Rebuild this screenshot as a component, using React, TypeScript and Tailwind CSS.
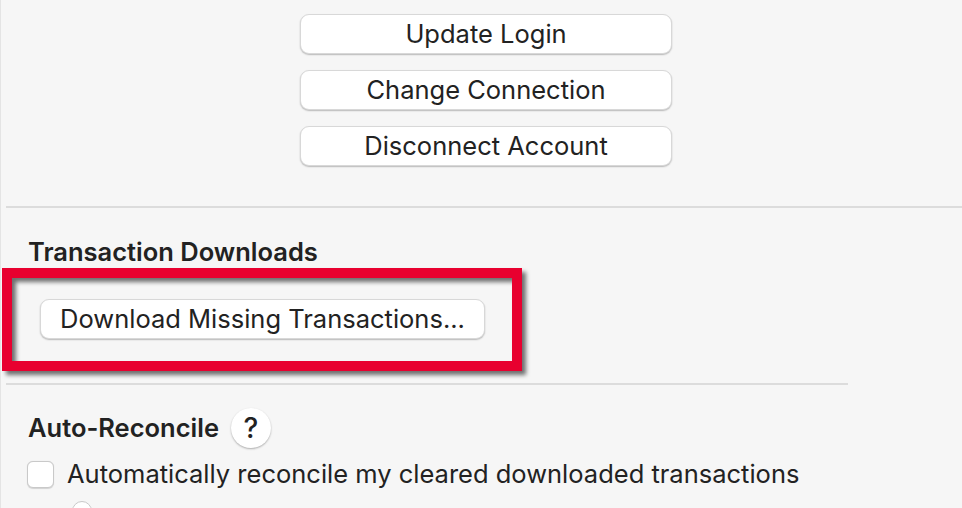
const font = { fontFamily: "Inter, 'Liberation Sans', sans-serif" }

const MacButton = ({ label, className }: { label: string; className: string }) => {
  return (
    <button
      className={`h-[40px] rounded-[9px] bg-white text-[25.5px] leading-[30px] text-[#222222] border-[0.5px] border-[#d8d8d8] shadow-[0_1px_1.5px_rgba(0,0,0,0.25)] ${className}`}
    >
      {label}
    </button>
  )
}

const App = () => {
  return (
    <div style={font} className="relative h-[508px] w-[962px] overflow-hidden bg-[#f6f6f6] border-l border-[#e4e4e4]">
      <div className="flex flex-col gap-4 pt-[14px] pl-[299px] w-[671px]">
        <MacButton label="Update Login" className="w-full" />
        <MacButton label="Change Connection" className="w-full" />
        <MacButton label="Disconnect Account" className="w-full" />
      </div>

      <div className="mt-[40px] ml-[5px] h-[2px] bg-[#dcdcdc]" />

      <div className="pl-[27px] pt-[29px] text-[25.5px] font-semibold leading-[30px] text-[#222222]">
        Transaction Downloads
      </div>

      <div className="pl-[39px] pt-[32px]">
        <MacButton label="Download Missing Transactions..." className="w-[445px]" />
      </div>

      <div className="mt-[44px] ml-[5px] w-[842px] h-[2px] bg-[#dcdcdc]" />

      <div className="flex items-center gap-[12px] pl-[27px] pt-[23px]">
        <span className="text-[25.5px] font-semibold leading-[30px] text-[#222222]">Auto-Reconcile</span>
        <span className="flex h-[40px] w-[40px] items-center justify-center rounded-full bg-white text-[28px] font-medium text-[#222222] shadow-[0_1px_2px_rgba(0,0,0,0.3)]">
          ?
        </span>
      </div>

      <div className="flex items-center gap-[13px] pl-[26px] pt-[11px]">
        <span className="h-[27px] w-[27px] rounded-[6px] border border-[#c9c9c9] bg-white shadow-[0_0.5px_1px_rgba(0,0,0,0.15)]" />
        <span className="text-[25.5px] leading-[30px] text-[#222222]">
          Automatically reconcile my cleared downloaded transactions
        </span>
      </div>

      <div className="pl-[71px] pt-[12px]">
        <span className="block h-[20px] w-[20px] rounded-full border border-[#c9c9c9] bg-white" />
      </div>

      {/* red highlight frame */}
      <div className="absolute left-[1px] top-[268px] h-[103px] w-[520px] border-[10px] border-[#e8002f] drop-shadow-[4px_4px_2px_rgba(0,0,0,0.55)]" />
    </div>
  )
}

export default App
